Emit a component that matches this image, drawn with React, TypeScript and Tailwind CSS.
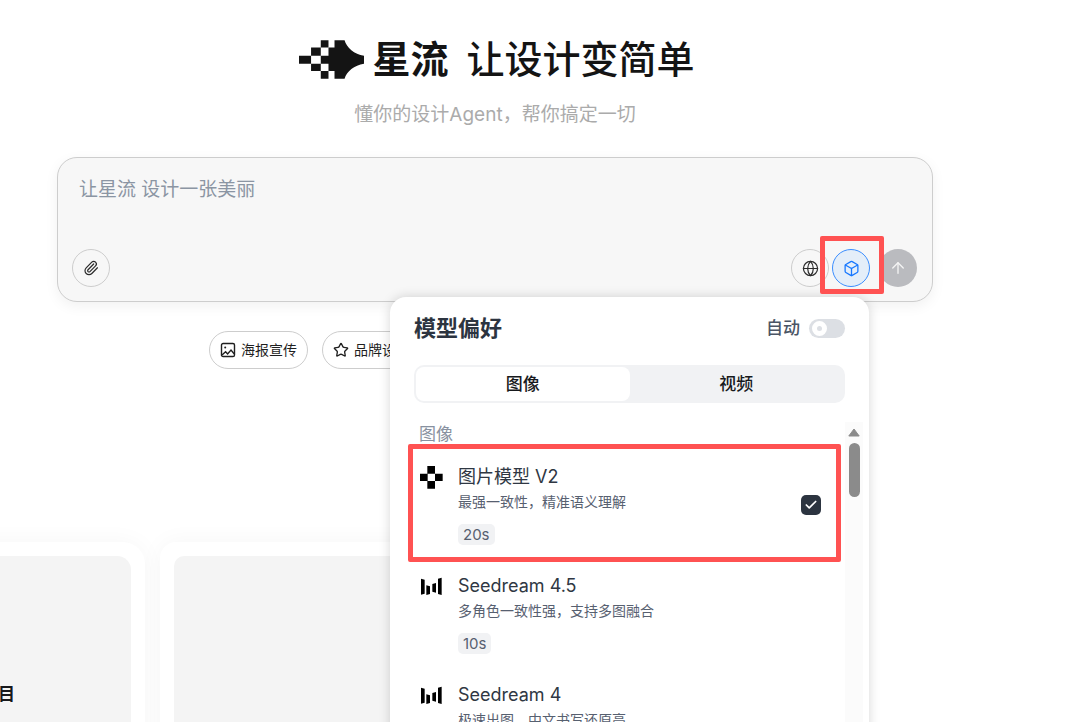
import React, { useState } from 'react';
import { ArrowUp, Box, Check, Globe, Paperclip, Star } from 'lucide-react';

interface ModelOption {
  id: string;
  name: string;
  desc: string;
  time: string;
  icon: 'cross' | 'bars';
}

const MODELS: ModelOption[] = [
  { id: 'v2', name: '图片模型 V2', desc: '最强一致性，精准语义理解', time: '20s', icon: 'cross' },
  { id: 'seedream-45', name: 'Seedream 4.5', desc: '多角色一致性强，支持多图融合', time: '10s', icon: 'bars' },
  { id: 'seedream-4', name: 'Seedream 4', desc: '极速出图，中文书写还原高', time: '10s', icon: 'bars' },
];

const LogoMark = () => (
  <svg viewBox="0 0 194 115" className="w-[65px] h-[39px] shrink-0" fill="#141414" aria-hidden="true">
    <path d="M0 46H36V70H0Z M36 22H65V46H36Z M36 70H65V92H36Z M65 0H88V22H65Z M65 92H88V115H65Z M65 46H90V70H65Z" />
    <path d="M106 0H136C142 22 165 42 194 46V70C165 74 142 93 136 115H106V92H88V22H106Z" />
  </svg>
);

const CrossIcon = () => (
  <svg viewBox="0 0 72 72" className="w-6 h-6 shrink-0" fill="#000" aria-hidden="true">
    <path d="M22 3H45V26H22Z M0 26H23V48H0Z M45 26H68V48H45Z M22 48H45V71H22Z" />
  </svg>
);

const BarsIcon = () => (
  <svg viewBox="0 0 72 72" className="w-6 h-6 shrink-0" fill="#000" aria-hidden="true">
    <path d="M3 14L14 17V59L3 62Z M19 34L30 37V60L19 63Z M48 27L37 30V53L48 56Z M65 11L54 14V60L65 63Z" />
  </svg>
);

const PictureIcon = () => (
  <svg viewBox="0 0 16 16" className="w-4 h-4 shrink-0" fill="none" stroke="currentColor" strokeWidth="1.4" aria-hidden="true">
    <rect x="1.5" y="1.5" width="13" height="13" rx="1.6" />
    <circle cx="5.2" cy="5.4" r="1" fill="currentColor" stroke="none" />
    <path d="M2 13L5.6 9.8L7.6 12L11 8L14.3 12" />
  </svg>
);

const ModelRow: React.FC<{ model: ModelOption; selected: boolean; onSelect: () => void }> = ({ model, selected, onSelect }) => (
  <li className="relative">
    <label htmlFor={model.id} className="flex items-start gap-[14px] pl-[6px] pr-6 py-[14px] cursor-pointer">
      {model.icon === 'cross' ? <CrossIcon /> : <BarsIcon />}
      <span className="flex-1 flex flex-col items-start">
        <span className="text-[18px] leading-6 text-[#2f3743]">{model.name}</span>
        <span className="mt-[3px] text-[14px] leading-5 text-[#576070]">{model.desc}</span>
        <span className="mt-3 px-[5px] rounded-[5px] bg-[#f1f2f4] text-[15px] leading-[21px] text-[#576070]">{model.time}</span>
      </span>
      <span className="relative self-center w-5 h-5">
        <input
          id={model.id}
          type="checkbox"
          checked={selected}
          onChange={onSelect}
          className="block w-5 h-5 appearance-none rounded-[5px] checked:bg-[#2c3440]"
        />
        {selected && <Check size={14} strokeWidth={3} className="absolute inset-[3px] text-white pointer-events-none" />}
      </span>
    </label>
    {selected && (
      <div className="absolute -left-[6px] right-[4px] -top-[7px] -bottom-[3px] border-5 border-[#ff5252] rounded-[2px] pointer-events-none" />
    )}
  </li>
);

const ModelPanel = () => {
  const [auto, setAuto] = useState(false);
  const [tab, setTab] = useState('图像');
  const [selected, setSelected] = useState('v2');

  return (
    <section className="absolute z-10 right-[63px] top-[139px] w-[479px] pt-4 rounded-[16px] bg-white shadow-[0_0_12px_rgba(0,0,0,0.16)]">
      <div className="flex items-center justify-between px-6">
        <h2 className="text-[22px] leading-[30px] font-bold text-[#2c3440]">模型偏好</h2>
        <label htmlFor="auto" className="flex items-center gap-[9px] text-[17px] leading-6 font-medium text-[#4b5565]">
          自动
          <span className="relative w-9 h-[19px]">
            <input
              id="auto"
              type="checkbox"
              role="switch"
              checked={auto}
              onChange={(e) => setAuto(e.target.checked)}
              className="block w-9 h-[19px] appearance-none rounded-full bg-[#dcdfe4] checked:bg-[#1677ff]"
            />
            <span className="absolute left-[3px] top-[2px] w-[15px] h-[15px] rounded-full bg-white border-5 border-white pointer-events-none">
              <span className="block w-[5px] h-[5px] rounded-full bg-[#dcdfe4]" />
            </span>
          </span>
        </label>
      </div>

      <div role="tablist" className="mt-[22px] mx-6 h-[38px] p-[2px] flex rounded-[10px] bg-[#f1f2f4]">
        {['图像', '视频'].map((name) => (
          <button
            key={name}
            role="tab"
            aria-selected={tab === name}
            onClick={() => setTab(name)}
            className={`flex-1 rounded-[8px] text-[17px] leading-6 font-medium text-[#17191c] ${tab === name ? 'bg-white' : ''}`}
          >
            {name}
          </button>
        ))}
      </div>

      <div className="mt-[19px] pl-6 pr-[6px] h-[340px] flex overflow-hidden">
        <div className="flex-1">
          <h3 className="pl-[5px] text-[17px] leading-6 text-[#8891a0]">图像</h3>
          <ul className="mt-[5px] flex flex-col gap-px">
            {MODELS.map((m) => (
              <ModelRow key={m.id} model={m} selected={selected === m.id} onSelect={() => setSelected(m.id)} />
            ))}
          </ul>
        </div>
        <div className="w-[18px] pt-[6px] flex flex-col items-center bg-[#fbfbfb]">
          <svg viewBox="0 0 12 9" className="w-3 h-[9px]" fill="#8b8b8b" stroke="#8b8b8b" strokeLinejoin="round" aria-hidden="true">
            <path d="M6 1L11.2 8H0.8Z" />
          </svg>
          <div className="mt-[6px] w-[11px] h-[54px] rounded-full bg-[#8b8b8b]" />
        </div>
      </div>
    </section>
  );
};

const Composer = () => (
  <div className="relative mt-7 pl-[14px] pr-[15px] pt-[18px] pb-[14px] rounded-[20px] border border-[#cdcdcd] bg-[#f7f7f7] shadow-[0_4px_14px_rgba(0,0,0,0.06)]">
    <textarea
      aria-label="让星流 设计一张美丽"
      placeholder="让星流 设计一张美丽"
      className="block w-full h-[73px] px-[7px] resize-none outline-none bg-transparent text-[19px] leading-7 placeholder:text-[#8b95a3]"
    />
    <div className="flex items-center">
      <button aria-label="附件" className="w-[38px] h-[38px] rounded-full border border-[#cdcdcd] flex items-center justify-center text-[#2b2b2b]">
        <Paperclip size={16} strokeWidth={1.8} />
      </button>
      <button aria-label="联网" className="ml-auto w-[38px] h-[38px] rounded-full border border-[#cdcdcd] flex items-center justify-center text-[#2b2b2b]">
        <Globe size={17} strokeWidth={1.7} />
      </button>
      <div className="relative ml-[3px] mr-[9px]">
        <button aria-label="模型" className="w-[38px] h-[38px] rounded-full border border-[#3b8eff] bg-[#e4eef9] flex items-center justify-center text-[#1677ff]">
          <Box size={17} strokeWidth={1.8} />
        </button>
        <div className="absolute z-20 -left-3 -right-[14px] -top-[13px] -bottom-[7px] border-5 border-[#ff5252] rounded-[2px] pointer-events-none" />
      </div>
      <button aria-label="发送" className="w-[38px] h-[38px] rounded-full bg-[#babbbf] flex items-center justify-center text-[#f4f4f4]">
        <ArrowUp size={18} strokeWidth={1.8} />
      </button>
    </div>
    <ModelPanel />
  </div>
);

const App = () => {
  return (
    <main className="h-screen overflow-hidden bg-white font-['Inter','Noto_Sans_CJK_SC',sans-serif]">
      <div className="pl-[57px] pr-[147px] pt-[31px]">
        <header className="text-center">
          <h1 className="h-14 pl-1 flex items-center justify-center gap-2 text-[38px] leading-[56px] font-medium text-[#141414]">
            <LogoMark />
            <span className="font-bold">星流</span>
            <span className="ml-[10px]">让设计变简单</span>
          </h1>
          <p className="mt-[14px] text-[19px] leading-7 text-[#ababab]">懂你的设计Agent，帮你搞定一切</p>
        </header>

        <Composer />

        <div className="mt-[29px] pl-[152px] flex gap-[14px]">
          <button className="h-[38px] px-[10px] flex items-center gap-[5px] rounded-full border border-[#cdcdcd] text-[14px] leading-5 text-[#1f1f1f]">
            <PictureIcon />
            海报宣传
          </button>
          <button className="h-[38px] px-[10px] flex items-center gap-[5px] rounded-full border border-[#cdcdcd] text-[14px] leading-5 text-[#1f1f1f]">
            <Star size={16} strokeWidth={2} />
            品牌设计
          </button>
        </div>
      </div>

      {/* project strip, scrolled a little to the left */}
      <div className="mt-[173px] -ml-[183px] flex gap-[15px]">
        <article className="w-[328px] shrink-0 p-[14px] rounded-[22px] bg-white shadow-[0_0_24px_rgba(0,0,0,0.04)]">
          <div className="h-[220px] pt-[126px] rounded-[14px] bg-[#f4f4f4] text-center text-[17px] leading-6 font-bold text-[#17191c]">
            新建项目
          </div>
        </article>
        <article className="w-[328px] shrink-0 p-[14px] rounded-[16px] bg-white shadow-[0_0_24px_rgba(0,0,0,0.04)]">
          <div className="h-[220px] rounded-[10px] bg-[#f4f4f4]" />
        </article>
      </div>
    </main>
  );
};

export default App;
